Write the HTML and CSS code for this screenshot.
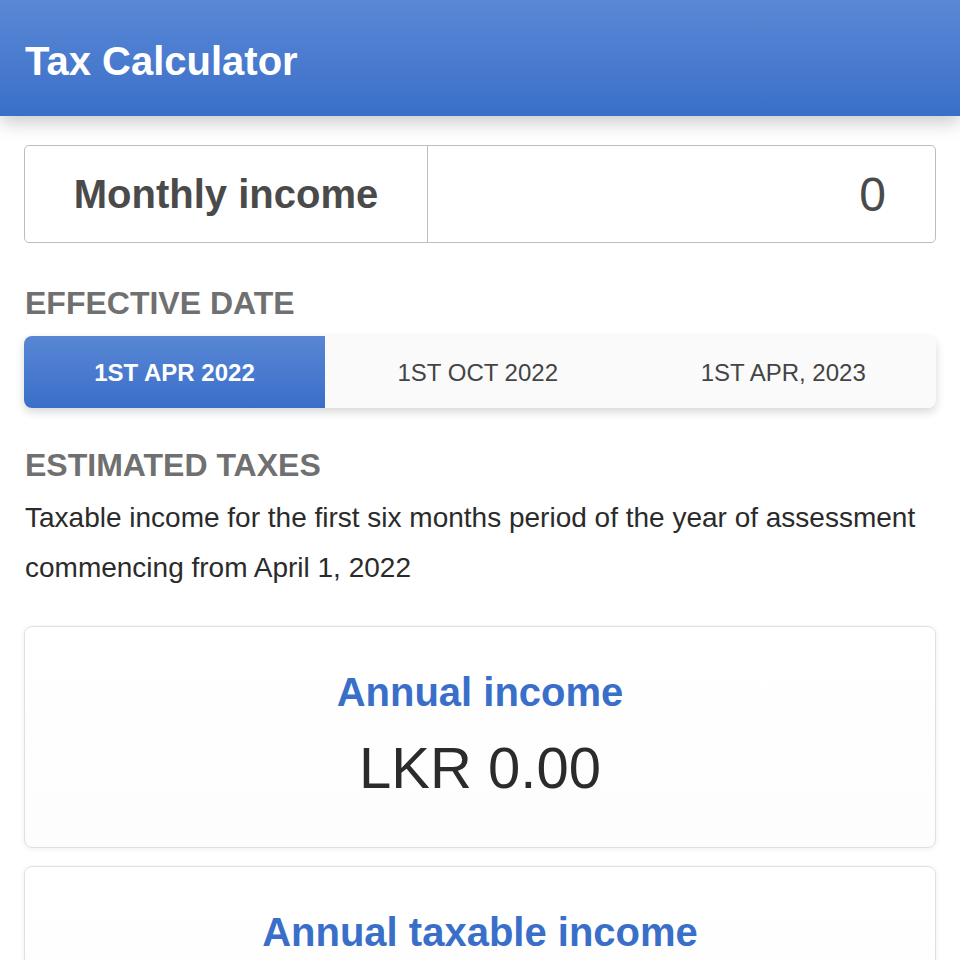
FILE: index.html
```html
<!DOCTYPE html>
<html lang="en">
<head>
<meta charset="utf-8">
<title>Tax Calculator</title>
<link rel="stylesheet" href="styles.css">
</head>
<body>
<header class="app-bar">
  <h1 class="app-title">Tax Calculator</h1>
</header>
<main class="content">
  <div class="income-group">
    <label class="income-label" for="income">Monthly income</label>
    <input class="income-input" id="income" type="text" value="0">
  </div>

  <h2 class="section-title section-title--date">EFFECTIVE DATE</h2>
  <div class="segmented">
    <button class="segment segment--active">1ST APR 2022</button>
    <button class="segment">1ST OCT 2022</button>
    <button class="segment">1ST APR, 2023</button>
  </div>

  <h2 class="section-title section-title--taxes">ESTIMATED TAXES</h2>
  <p class="description">Taxable income for the first six months period of the year of assessment commencing from April 1, 2022</p>

  <section class="card">
    <h3 class="card-title">Annual income</h3>
    <div class="card-value">LKR 0.00</div>
  </section>
  <section class="card">
    <h3 class="card-title">Annual taxable income</h3>
    <div class="card-value">LKR 0.00</div>
  </section>
</main>
</body>
</html>
```

FILE: styles.css
```css
* { box-sizing: border-box; }

html, body {
  margin: 0;
  padding: 0;
  background: #ffffff;
  font-family: "Liberation Sans", Arial, sans-serif;
  color: #333333;
}

.app-bar {
  height: 116px;
  display: flex;
  align-items: center;
  padding: 6px 25px 0 25px;
  background: linear-gradient(to bottom, #5a88d5, #3a6fc9);
  box-shadow: 0 6px 18px rgba(0, 0, 0, 0.22);
  position: relative;
  z-index: 1;
}

.app-title {
  margin: 0;
  font-size: 40px;
  font-weight: bold;
  color: #ffffff;
  line-height: 46px;
}

.content {
  padding: 29px 24px 0 24px;
}

.income-group {
  display: flex;
  height: 98px;
  border: 1px solid #bdbdbd;
  border-radius: 5px;
  background: #ffffff;
}

.income-label {
  flex: 0 0 403px;
  display: flex;
  align-items: center;
  justify-content: center;
  border-right: 1px solid #bdbdbd;
  font-size: 40px;
  font-weight: bold;
  color: #4a4a4a;
}

.income-input {
  flex: 1;
  min-width: 0;
  border: none;
  outline: none;
  background: transparent;
  text-align: right;
  padding: 0 49px 0 10px;
  font-family: "Liberation Sans", Arial, sans-serif;
  font-size: 48px;
  color: #4a4a4a;
  border-radius: 0 5px 5px 0;
}

.section-title {
  margin: 0;
  font-size: 32px;
  font-weight: bold;
  color: #707070;
  line-height: 36px;
  padding-left: 1px;
}

.section-title--date {
  margin-top: 42px;
}

.section-title--taxes {
  margin-top: 39px;
}

.segmented {
  margin-top: 15px;
  display: grid;
  grid-template-columns: 301px 1fr 1fr;
  height: 72px;
  border-radius: 8px;
  overflow: hidden;
  background: #fafafa;
  box-shadow: 0 4px 10px rgba(0, 0, 0, 0.16);
}

.segment {
  border: none;
  background: transparent;
  font-family: "Liberation Sans", Arial, sans-serif;
  font-size: 24px;
  color: #444444;
  padding: 2px 0 0 0;
  cursor: pointer;
}

.segment--active {
  background: linear-gradient(to bottom, #5886d4, #3a6fc9);
  color: #ffffff;
  font-weight: bold;
}

.description {
  margin: 10px 0 0 0;
  font-size: 28px;
  line-height: 50px;
  color: #2b2b2b;
  padding-left: 1px;
}

.card {
  margin-top: 33px;
  border: 1px solid #e0e0e0;
  border-radius: 8px;
  background: linear-gradient(to bottom, #ffffff, #fdfdfd);
  box-shadow: 0 1px 5px rgba(0, 0, 0, 0.07);
  text-align: center;
  padding: 42px 20px 46px;
}

.card + .card {
  margin-top: 18px;
}

.card-title {
  margin: 0;
  font-size: 40px;
  line-height: 46px;
  font-weight: bold;
  color: #3a6fc9;
}

.card-value {
  margin-top: 20px;
  font-size: 58px;
  line-height: 66px;
  color: #2d2a2a;
}
```
